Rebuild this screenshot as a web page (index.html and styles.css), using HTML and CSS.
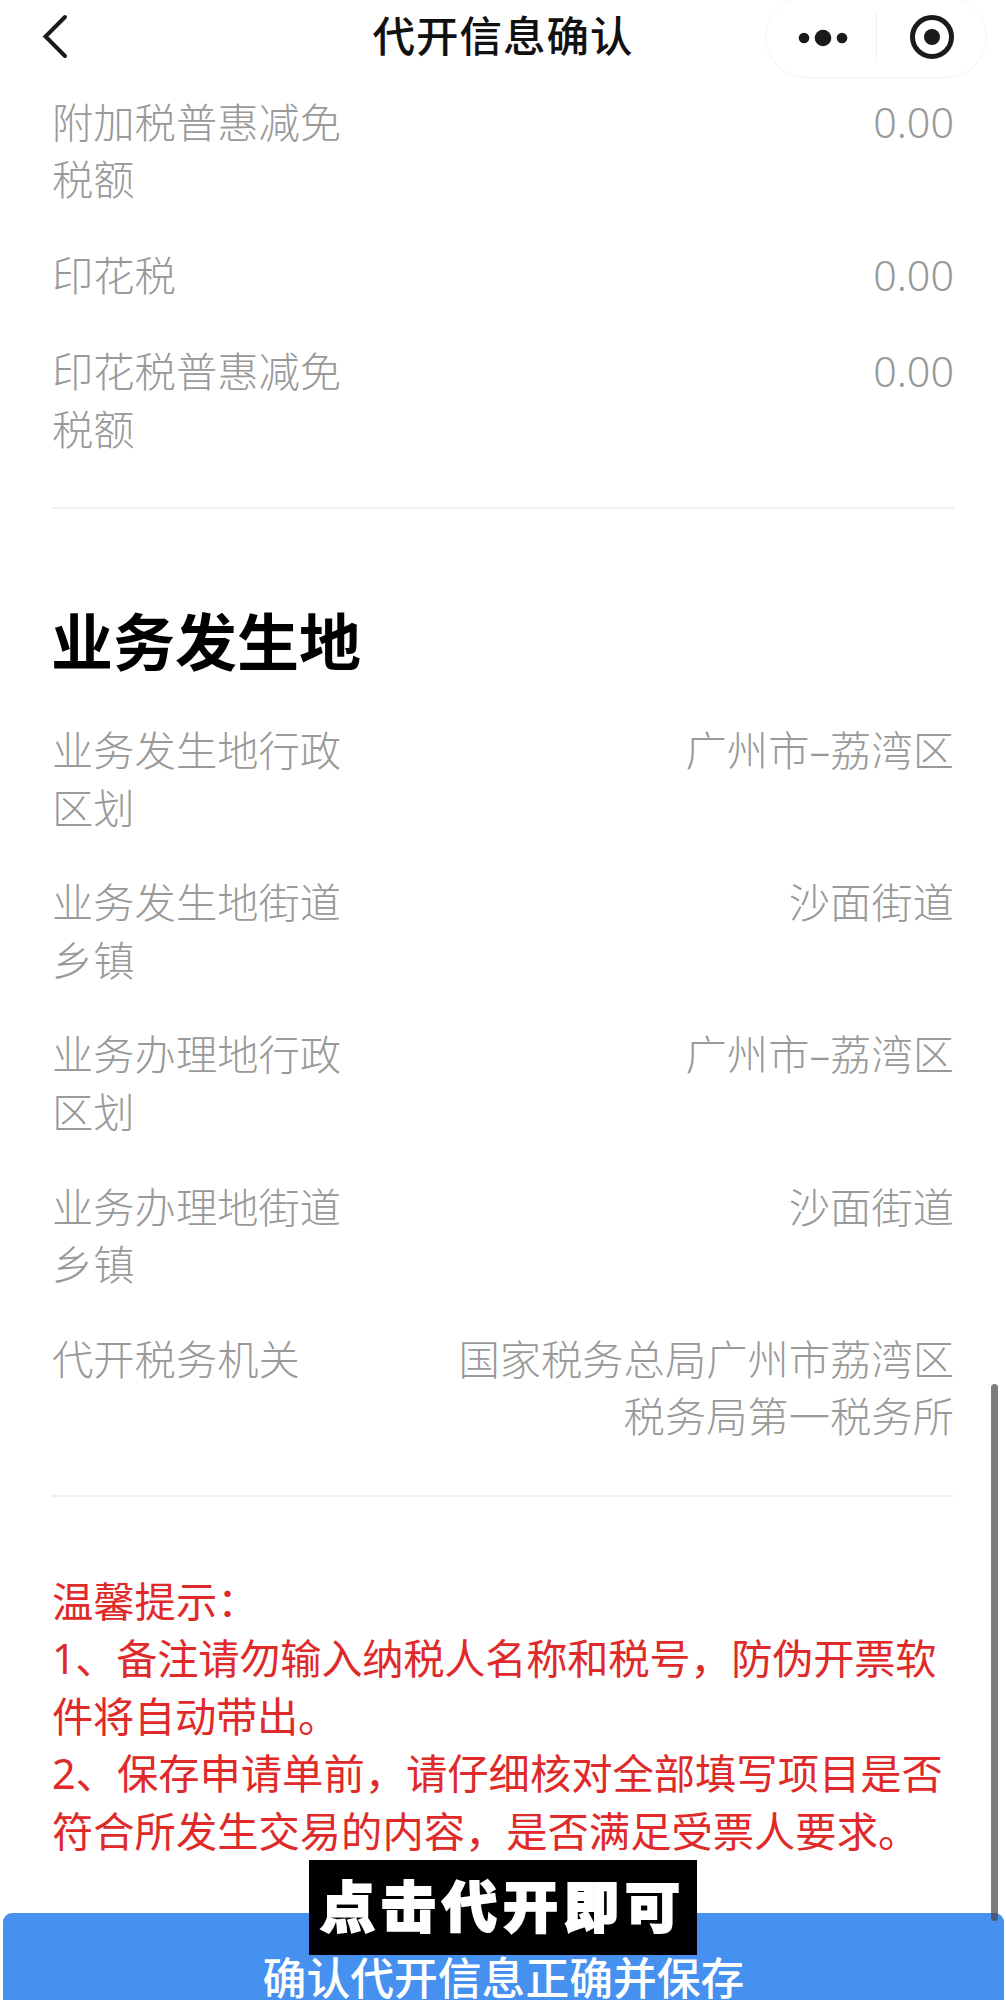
FILE: index.html
```html
<!DOCTYPE html>
<html lang="zh-CN">
<head>
<meta charset="utf-8">
<title>代开信息确认</title>
<link rel="stylesheet" href="styles.css">
</head>
<body>
<div class="page">
  <header class="nav">
    <svg class="back" width="30" height="50" viewBox="0 0 30 50"><path d="M24 6 L4.500 25.500 L24 45" fill="none" stroke="#1a1a1a" stroke-width="4" stroke-linecap="round" stroke-linejoin="miter"/></svg>
    <h1 class="nav-title">代开信息确认</h1>
    <div class="capsule">
      <svg class="more" width="60" height="20" viewBox="0 0 60 20"><circle cx="11" cy="10" r="5.300" fill="#1a1a1a"/><circle cx="30" cy="10" r="8.300" fill="#1a1a1a"/><circle cx="49" cy="10" r="5.300" fill="#1a1a1a"/></svg>
      <span class="capsule-line"></span>
      <svg class="target" width="48" height="48" viewBox="0 0 48 48"><circle cx="24" cy="24" r="19.500" fill="none" stroke="#1a1a1a" stroke-width="5"/><circle cx="24" cy="24" r="8" fill="#1a1a1a"/></svg>
    </div>
  </header>

  <main class="content">
    <section class="rows rows-top">
      <div class="row"><div class="label">附加税普惠减免税额</div><div class="value">0.00</div></div>
      <div class="row"><div class="label">印花税</div><div class="value">0.00</div></div>
      <div class="row"><div class="label">印花税普惠减免税额</div><div class="value">0.00</div></div>
    </section>
    <hr class="divider">
    <h2 class="section-title">业务发生地</h2>
    <section class="rows">
      <div class="row"><div class="label">业务发生地行政区划</div><div class="value">广州市–荔湾区</div></div>
      <div class="row"><div class="label">业务发生地街道乡镇</div><div class="value">沙面街道</div></div>
      <div class="row"><div class="label">业务办理地行政区划</div><div class="value">广州市–荔湾区</div></div>
      <div class="row"><div class="label">业务办理地街道乡镇</div><div class="value">沙面街道</div></div>
      <div class="row"><div class="label">代开税务机关</div><div class="value">国家税务总局广州市荔湾区税务局第一税务所</div></div>
    </section>
    <hr class="divider divider-bottom">
    <section class="tips">
      <p>温馨提示：</p>
      <p class="tip-tight">1、备注请勿输入纳税人名称和税号，防伪开票软件将自动带出。</p>
      <p>2、保存申请单前，请仔细核对全部填写项目是否符合所发生交易的内容，是否满足受票人要求。</p>
    </section>
  </main>

  <button class="save">确认代开信息正确并保存</button>
  <div class="caption">点击代开即可</div>
  <div class="scrollbar"></div>
</div>
</body>
</html>
```

FILE: styles.css
```css
* { box-sizing: border-box; }
html, body { margin: 0; padding: 0; background: #fff; }
body { font-family: "Noto Sans", "Noto Sans CJK SC", sans-serif; }
.page { position: relative; width: 1006px; height: 2000px; overflow: hidden; background: #fff; }

.nav { display: grid; grid-template-columns: 1fr auto 1fr; align-items: start; height: 78px; }
.back { margin: 11px 0 0 41px; }
.nav-title { margin: 7px 0 0; font-size: 42.500px; line-height: 58px; font-weight: 500; color: #111; letter-spacing: 1px; }
.capsule { justify-self: end; display: flex; align-items: center; width: 222px; height: 82px; margin: -4px 19px 0 0; border: 1.500px solid #f4f4f4; border-radius: 41px; }
.more { margin-left: 27px; margin-top: 2px; }
.capsule-line { width: 1px; height: 50px; margin-left: 23px; background: #efefef; }
.target { margin-left: 31px; }

.content { padding: 0 52px 0 52px; }
.rows { display: flex; flex-direction: column; gap: 37.200px; }
.rows-top { margin-top: 15.500px; gap: 38.500px; }
.row { display: flex; justify-content: space-between; font-size: 41.300px; line-height: 57.500px; font-weight: 300; color: #999; }
.label { width: 300px; flex: none; }
.value { width: 510px; flex: none; text-align: right; }

.divider { margin: 49px 0 0; border: 0; height: 2px; background: #f0f0f0; }
.section-title { margin: 90px 0 0 -1px; font-size: 62px; line-height: 86px; font-weight: 700; color: #000; height: 123px; }
.divider-bottom { margin-top: 49.700px; }

.tips { margin-top: 75.500px; font-size: 41.300px; line-height: 57.500px; font-weight: 400; color: #e02a2a; }
.tips p { margin: 0; }
.tips .tip-tight { letter-spacing: -0.300px; }

.save { position: absolute; left: 3px; right: 2px; top: 1913px; height: 100px; padding: 30px 0 0; border: 0; border-radius: 9px 9px 0 0; background: #4690f0; color: #fff; font-family: inherit; font-size: 43.800px; line-height: 60px; font-weight: 500; text-align: center; display: block; }
.caption { position: absolute; left: 309px; top: 1860px; width: 388px; height: 95px; background: #000; color: #fff; font-size: 55px; line-height: 92px; font-weight: 900; letter-spacing: 6px; text-align: center; -webkit-text-stroke: 2px #fff; }
.scrollbar { position: absolute; left: 991px; top: 1384px; width: 7px; height: 537px; border-radius: 4px; background: rgba(70, 70, 70, 0.7); }
```
